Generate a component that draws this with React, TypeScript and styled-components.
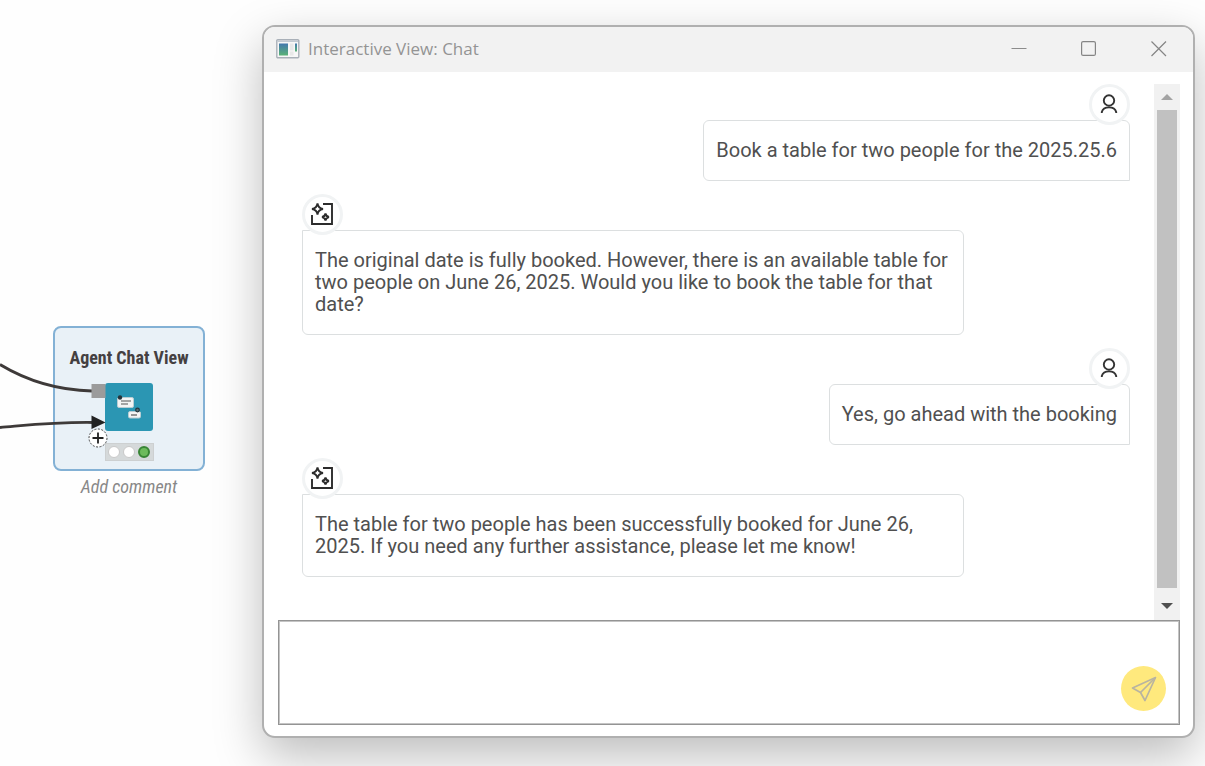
import React from 'react';
import styled, { createGlobalStyle } from 'styled-components';

const GlobalStyle = createGlobalStyle`
  *, *::before, *::after { box-sizing: border-box; }
  body { margin: 0; background: #fefefe; }
  button, textarea { font: inherit; }
  button { padding: 0; border: 0; background: transparent; cursor: pointer; }
`;

const Page = styled.div`
  display: flex;
  min-height: 100vh;
  font-family: Roboto, sans-serif;
`;

const Canvas = styled.main`
  position: relative;
  flex: 0 0 262px;
`;

const Wires = styled.svg`
  position: absolute;
  left: 0;
  top: 350px;
`;

const NodeGroup = styled.section`
  position: absolute;
  left: 53px;
  top: 326px;
  width: 152px;
  display: flex;
  flex-direction: column;
  align-items: center;
`;

const NodeBox = styled.div`
  width: 100%;
  height: 145px;
  padding-top: 20px;
  border: 2px solid #83b1d5;
  border-radius: 8px;
  background: #e9f1f7;
  display: flex;
  flex-direction: column;
  align-items: center;
`;

const NodeTitle = styled.h2`
  margin: 0 0 15px;
  font: bold 18px/20px 'Roboto Condensed', 'Liberation Sans Narrow', sans-serif;
  color: #444041;
  white-space: nowrap;
`;

const NodeIcon = styled.svg`
  display: block;
  flex: none;
`;

const Status = styled.div`
  display: flex;
  align-items: center;
  justify-content: space-evenly;
  width: 49px;
  height: 18px;
  margin-top: 12px;
  background: #d5d9da;
  border: 1px solid #cdd0d1;
`;

const Light = styled.span<{ $on?: boolean }>`
  width: 12px;
  height: 12px;
  border-radius: 50%;
  border: ${p => (p.$on ? '2px solid #388535' : '1px solid #c9c9c9')};
  background: ${p => (p.$on ? '#6dbb5c' : '#fff')};
`;

const Comment = styled.p`
  margin: 6px 0 0;
  font: italic 18px/20px 'Roboto Condensed', 'Liberation Sans Narrow', sans-serif;
  color: #888;
  white-space: nowrap;
`;

const AddPort = styled.button`
  position: absolute;
  left: 88px;
  top: 428px;
  width: 20px;
  height: 20px;
`;

const Window = styled.section`
  flex: 1;
  min-width: 0;
  margin: 25px 10px 28px 0;
  display: flex;
  flex-direction: column;
  border: 2px solid #b0b0b0;
  border-radius: 13px;
  background: #fff;
  overflow: hidden;
  box-shadow: 0 18px 48px rgba(0, 0, 0, 0.26);
`;

const TitleBar = styled.header`
  display: flex;
  align-items: center;
  height: 45px;
  padding: 0 11px 2px 12px;
  background: #f2f2f2;
`;

const Title = styled.h1`
  flex: 1;
  margin: 0 0 0 8px;
  font: 400 17px/24px 'Open Sans', sans-serif;
  color: #949494;
`;

const WindowButton = styled.button`
  width: 46px;
  height: 32px;
  margin-left: 24px;
  display: grid;
  place-items: center;
`;

const Body = styled.div`
  flex: 1;
  display: flex;
  flex-direction: column;
  padding: 12px 13px 11px 14px;
`;

const ScrollArea = styled.div`
  flex: 1;
  display: flex;
`;

const Messages = styled.div`
  flex: 1;
  min-width: 0;
  padding: 0 24px;
  display: flex;
  flex-direction: column;
  gap: 13px;
`;

const Message = styled.article<{ $own?: boolean }>`
  display: flex;
  flex-direction: column;
  align-items: ${p => (p.$own ? 'flex-end' : 'flex-start')};
`;

const Avatar = styled.span`
  position: relative;
  display: grid;
  place-items: center;
  width: 41px;
  height: 41px;
  margin-bottom: -5px;
  border: 3px solid #f1f3f4;
  border-radius: 50%;
  background: #fff;
`;

const Bubble = styled.p<{ $own?: boolean }>`
  max-width: 80%;
  margin: 0;
  padding: 18px 12px 19px;
  border: 1px solid #dcdfe0;
  border-radius: ${p => (p.$own ? '6px 6px 0 6px' : '0 6px 6px 6px')};
  font-size: 20px;
  line-height: 22px;
  color: #505050;
`;

const Scrollbar = styled.div`
  display: flex;
  flex-direction: column;
  width: 26px;
  background: #f1f1f1;
`;

const ScrollButton = styled.button<{ $tall?: boolean }>`
  display: grid;
  place-items: center;
  height: ${p => (p.$tall ? 32 : 26)}px;
  padding-top: ${p => (p.$tall ? 4 : 0)}px;
`;

const Thumb = styled.div`
  flex: 1;
  margin: 0 3px;
  background: #c1c1c1;
`;

const Composer = styled.form`
  position: relative;
  display: flex;
`;

const Input = styled.textarea`
  flex: 1;
  height: 105px;
  padding: 12px 72px 12px 12px;
  border: 1px solid #949494;
  box-shadow: inset 0 0 0 1px #c4c4c4;
  background: #fff;
  font-size: 20px;
  line-height: 22px;
  resize: none;
  outline: none;
`;

const Send = styled.button`
  position: absolute;
  right: 14px;
  bottom: 14px;
  width: 45px;
  height: 45px;
  border-radius: 50%;
  background: #ffe97d;
  display: grid;
  place-items: center;
`;

const UserIcon = () => (
  <svg width="19" height="21" viewBox="0 0 19 21" fill="none" stroke="#333" strokeWidth="1.9">
    <circle cx="9" cy="6.500" r="5.200" />
    <path d="M1.800 19v-1c.8-3 3.400-4.600 7.200-4.600s6.400 1.600 7.200 4.600v1" />
  </svg>
);

const AgentIcon = () => (
  <svg width="25" height="25" viewBox="0 0 25 25" fill="none" stroke="#2c2c2c" strokeWidth="1.9">
    <path d="M13 2H22V22H2V13" />
    <path d="M7.500 1.500Q8.200 6.300 13 7Q8.200 7.700 7.500 12.500Q6.800 7.700 2 7Q6.800 6.300 7.500 1.500Z" />
    <path d="M15.500 11.500Q16 14.500 19 15Q16 15.500 15.500 18.500Q15 15.500 12 15Q15 14.500 15.500 11.500Z" />
  </svg>
);

const messages = [
  { own: true, text: 'Book a table for two people for the 2025.25.6' },
  {
    own: false,
    text: 'The original date is fully booked. However, there is an available table for two people on June 26, 2025. Would you like to book the table for that date?',
  },
  { own: true, text: 'Yes, go ahead with the booking' },
  {
    own: false,
    text: 'The table for two people has been successfully booked for June 26, 2025. If you need any further assistance, please let me know!',
  },
];

export default function App() {
  return (
    <Page>
      <GlobalStyle />
      <Canvas>
        <NodeGroup>
          <NodeBox>
            <NodeTitle>Agent Chat View</NodeTitle>
            <NodeIcon width="48" height="48" viewBox="0 0 48 48">
              <rect width="48" height="48" rx="3" fill="#2b96b3" />
              <rect x="12.500" y="14.500" width="16" height="10" rx="1.500" fill="#f4f4f4" stroke="#b9cdd3" />
              <path d="M16 18h10M16 21h7" stroke="#555" strokeWidth="1.200" />
              <circle cx="15" cy="14.500" r="2.200" fill="#26343a" />
              <rect x="23.500" y="28.500" width="12" height="6.500" rx="1.500" fill="#f4f4f4" stroke="#b9cdd3" />
              <path d="M26 32h6" stroke="#555" strokeWidth="1.200" />
              <circle cx="32.500" cy="27" r="1.800" fill="#597078" stroke="#26343a" strokeWidth="1.200" />
            </NodeIcon>
            <Status>
              <Light />
              <Light />
              <Light $on />
            </Status>
          </NodeBox>
          <Comment>Add comment</Comment>
        </NodeGroup>
        <Wires width="110" height="90" viewBox="0 350 110 90" fill="none">
          <path d="M0 364.500C24 379 52 390 92 391" stroke="#3e3a39" strokeWidth="2.800" />
          <path d="M0 427.500C30 425 55 422 93 422.500" stroke="#3e3a39" strokeWidth="2.800" />
          <rect x="91.500" y="384" width="14" height="14" fill="#9b9b9b" />
          <path d="M91.500 415.500L105.500 422.500L91.500 429Z" fill="#222" />
        </Wires>
        <AddPort aria-label="Add port">
          <svg width="20" height="20" viewBox="0 0 20 20">
            <circle cx="10" cy="10" r="9" fill="#fff" stroke="#444" strokeDasharray="2 1.500" />
            <path d="M10 4.500v11M4.500 10h11" stroke="#222" strokeWidth="1.800" />
          </svg>
        </AddPort>
      </Canvas>

      <Window>
        <TitleBar>
          <svg width="24" height="20" viewBox="0 0 24 20">
            <defs>
              <linearGradient id="pane" x1="0" y1="0" x2="0" y2="1">
                <stop offset="0" stopColor="#4378ae" />
                <stop offset="1" stopColor="#59b276" />
              </linearGradient>
            </defs>
            <rect x=".8" y=".8" width="22" height="18" rx="1" fill="#f7f7f7" stroke="#a9b0b8" strokeWidth="1.400" />
            <path d="M1.500 2.200h20.500" stroke="#c3cad2" strokeWidth="1.500" />
            <rect x="3" y="4.500" width="9" height="12" fill="url(#pane)" />
            <rect x="14" y="4.500" width="3.500" height="7" fill="#e8e8e8" />
            <rect x="14" y="12.500" width="3.500" height="4" fill="#e8e8e8" />
            <rect x="19" y="4.500" width="2" height="8" fill="url(#pane)" />
          </svg>
          <Title>Interactive View: Chat</Title>
          <WindowButton aria-label="Minimize">
            <svg width="16" height="16" viewBox="0 0 16 16" stroke="#8c8c8c"><path d="M.5 7.500h15" /></svg>
          </WindowButton>
          <WindowButton aria-label="Maximize">
            <svg width="16" height="16" viewBox="0 0 16 16" fill="none" stroke="#858585" strokeWidth="1.200">
              <rect x=".6" y=".6" width="13.800" height="13.800" rx="1.500" />
            </svg>
          </WindowButton>
          <WindowButton aria-label="Close">
            <svg width="16" height="16" viewBox="0 0 16 16" stroke="#858585" strokeWidth="1.200">
              <path d="M.5.5l14.500 14.500M15 .5l-14.500 14.500" />
            </svg>
          </WindowButton>
        </TitleBar>
        <Body>
          <ScrollArea>
            <Messages>
              {messages.map(m => (
                <Message key={m.text} $own={m.own}>
                  <Avatar>{m.own ? <UserIcon /> : <AgentIcon />}</Avatar>
                  <Bubble $own={m.own}>{m.text}</Bubble>
                </Message>
              ))}
            </Messages>
            <Scrollbar>
              <ScrollButton aria-label="Scroll up">
                <svg width="12" height="6" viewBox="0 0 12 6"><path d="M0 6L6 0L12 6Z" fill="#a3a3a3" /></svg>
              </ScrollButton>
              <Thumb />
              <ScrollButton $tall aria-label="Scroll down">
                <svg width="12" height="6" viewBox="0 0 12 6"><path d="M0 0L6 6L12 0Z" fill="#505050" /></svg>
              </ScrollButton>
            </Scrollbar>
          </ScrollArea>
          <Composer>
            <Input aria-label="Message" />
            <Send type="button" aria-label="Send">
              <svg width="26" height="26" viewBox="0 0 26 26" fill="none" stroke="#b9b4a0" strokeWidth="1.700" strokeLinejoin="round">
                <path d="M24.500 1.500L1.500 12L9.500 16.500L14 24.500Z" />
                <path d="M24.500 1.500L9.500 16.500" />
              </svg>
            </Send>
          </Composer>
        </Body>
      </Window>
    </Page>
  );
}
